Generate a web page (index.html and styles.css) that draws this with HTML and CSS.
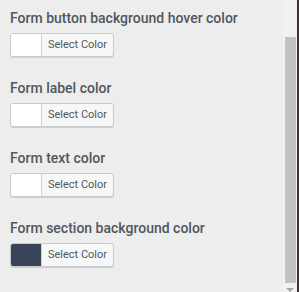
FILE: index.html
```html
<!DOCTYPE html>
<html>
<head>
<meta charset="utf-8">
<link rel="stylesheet" href="styles.css">
</head>
<body>
<div class="page">
  <div class="main">
    <div class="field">
      <div class="label">Form button background hover color</div>
      <button class="picker"><span class="swatch"></span><span class="btn-text">Select Color</span></button>
    </div>
    <div class="field">
      <div class="label">Form label color</div>
      <button class="picker"><span class="swatch"></span><span class="btn-text">Select Color</span></button>
    </div>
    <div class="field">
      <div class="label">Form text color</div>
      <button class="picker"><span class="swatch"></span><span class="btn-text">Select Color</span></button>
    </div>
    <div class="field">
      <div class="label">Form section background color</div>
      <button class="picker"><span class="swatch dark"></span><span class="btn-text">Select Color</span></button>
    </div>
  </div>
  <div class="scrollbar">
    <div class="track-top"></div>
    <div class="thumb"></div>
    <div class="arrow"></div>
  </div>
  <div class="edge"></div>
</div>
</body>
</html>
```
FILE: styles.css
```css
html, body {
  margin: 0;
  padding: 0;
}
body {
  background: #ededed;
  font-family: Roboto, "Liberation Sans", sans-serif;
}
.page {
  display: flex;
  height: 292px;
  overflow: hidden;
}
.main {
  flex: 1;
  padding: 8px 0 0 10px;
}
.field {
  height: 70px;
}
.label {
  font-size: 14px;
  font-weight: 500;
  color: #50575e;
  line-height: 20px;
  margin-bottom: 5px;
  white-space: nowrap;
}
.picker {
  display: flex;
  align-items: stretch;
  height: 24px;
  width: 104px;
  padding: 0;
  margin: 0;
  border: 1px solid #c9cacc;
  border-radius: 3px;
  background: #f6f7f7;
  box-shadow: 0 1px 0 #cfd0d2;
  overflow: hidden;
  font-family: Roboto, "Liberation Sans", sans-serif;
}
.swatch {
  width: 30px;
  background: #ffffff;
  border-right: 1px solid #d0d1d3;
}
.swatch.dark {
  background: #394458;
}
.btn-text {
  flex: 1;
  font-size: 11px;
  color: #50575e;
  line-height: 22px;
  text-align: center;
}
.scrollbar {
  width: 14px;
  background: #f1f1f1;
  display: flex;
  flex-direction: column;
  align-items: center;
}
.track-top {
  height: 37px;
}
.thumb {
  width: 11px;
  height: 246px;
  background: #c1c1c1;
}
.arrow {
  margin-top: 5px;
  width: 0;
  height: 0;
  border-left: 4px solid transparent;
  border-right: 4px solid transparent;
  border-top: 4px solid #a3a3a3;
}
.edge {
  width: 2px;
  background: #3b3030;
}
```
